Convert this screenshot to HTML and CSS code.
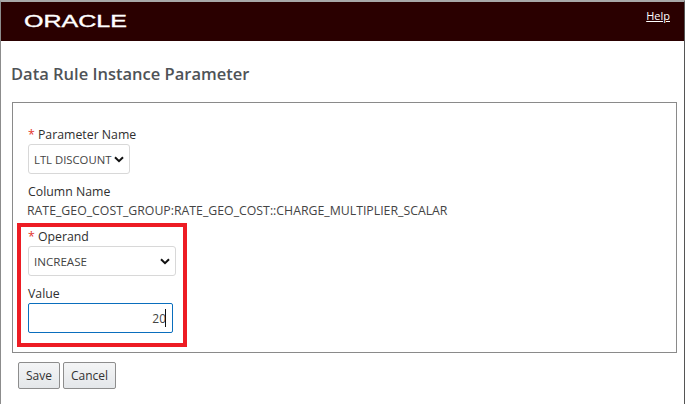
FILE: index.html
```html
<!DOCTYPE html>
<html lang="en">
<head>
    <meta charset="UTF-8">
    <meta name="viewport" content="width=device-width, initial-scale=1.0">
    <title>Data Rule Instance Parameter</title>
    <link rel="stylesheet" href="styles.css">
</head>
<body>
    <div class="page">
        <header class="brand-bar">
            <svg class="logo" width="104" height="20" viewBox="0 0 104 20"><text x="0" y="15" textLength="103" lengthAdjust="spacingAndGlyphs">ORACLE</text></svg>
            <a class="help" href="#">Help</a>
        </header>
        <h1 class="title">Data Rule Instance Parameter</h1>
        <div class="panel">
            <div class="field">
                <label class="label"><span class="req">*</span> Parameter Name</label>
                <div class="select select-short"><span>LTL DISCOUNT</span><svg width="10" height="7" viewBox="0 0 10 7"><path d="M1 1.2l4 4 4-4" fill="none" stroke="#111" stroke-width="2"/></svg></div>
            </div>
            <div class="field">
                <label class="label">Column Name</label>
                <div class="static">RATE_GEO_COST_GROUP:RATE_GEO_COST::CHARGE_MULTIPLIER_SCALAR</div>
            </div>
            <div class="field">
                <label class="label"><span class="req">*</span> Operand</label>
                <div class="select select-wide"><span>INCREASE</span><svg width="10" height="7" viewBox="0 0 10 7"><path d="M1 1.2l4 4 4-4" fill="none" stroke="#111" stroke-width="2"/></svg></div>
            </div>
            <div class="field">
                <label class="label">Value</label>
                <div class="input"><span>20</span><i class="caret"></i></div>
            </div>
            <div class="highlight"></div>
        </div>
        <div class="actions">
            <button class="button">Save</button>
            <button class="button">Cancel</button>
        </div>
    </div>
</body>
</html>
```

FILE: styles.css
```css
*{margin:0;padding:0;box-sizing:border-box}
html,body{height:100%;background:#fff}
body{font-family:"Open Sans","Noto Sans",sans-serif;font-size:12px;color:#333;overflow:hidden}
.page{height:404px;border-top:2px solid #a8a8a8;border-left:1px solid #8c8c8c;border-right:1px solid #555}
.brand-bar{height:39px;background:#2a0000;display:flex;justify-content:space-between;padding:6px 14px 0 23px}
.logo{margin-top:4px;display:block}
.logo text{font-family:"Liberation Sans",sans-serif;font-size:17px;fill:#fff;stroke:#fff;stroke-width:.35}
.help{color:#fff;font-size:11px;line-height:15px}
.title{font-size:16.5px;font-weight:600;color:#4f5357;line-height:22px;margin:22px 0 0 10px}
.panel{position:relative;height:251px;margin:17px 7px 0 11px;border:1px solid #8a8a8a;padding:23px 0 0 15px}
.field{margin-bottom:9px}
.label{display:block;font-size:12.3px;line-height:17px;color:#2f2f2f;white-space:nowrap}
.req{color:#e2342b}
.select{display:flex;align-items:center;justify-content:space-between;height:30px;margin-top:1px;padding:0 5px 0 5px;border:1px solid #d8d8d8;border-radius:3px;font-size:11.6px;color:#444;white-space:nowrap}
.select-short{width:102px;font-size:11.3px}
.select-wide{width:148px}
.static{font-size:12.3px;line-height:17px;color:#444;margin:2px 0 0 -1px;white-space:nowrap}
.input{display:flex;align-items:center;justify-content:flex-end;width:145px;height:30px;margin-top:1px;padding-right:6px;border:1px solid #0a6ebd;border-radius:2px;color:#444}
.caret{width:1px;height:18px;margin-left:-1px;background:#111}
.highlight{position:absolute;left:4px;top:120px;width:170px;height:124px;border:4px solid #ed1c24}
.actions{display:flex;gap:3px;margin:9px 0 0 17px}
.button{height:27px;padding:0 7px;font:12px "Open Sans","Noto Sans",sans-serif;color:#333;background:linear-gradient(#f4f5f6,#e4e7ea);border:1px solid #8d8d8d;border-radius:2px}
```
